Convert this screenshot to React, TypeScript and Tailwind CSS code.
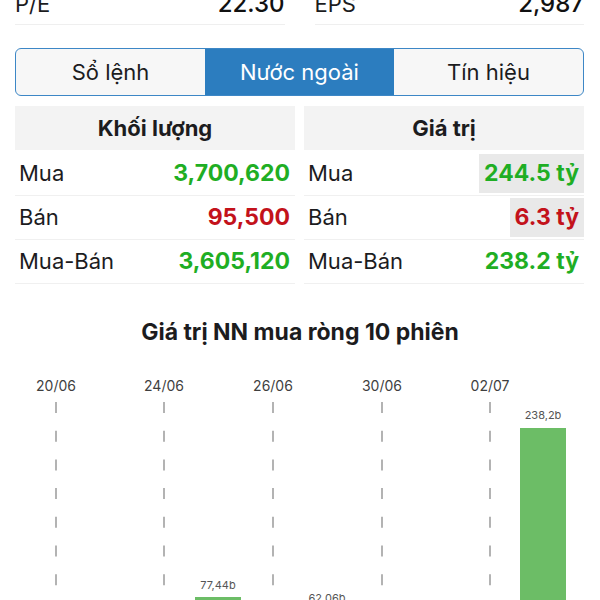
import React from "react";

const font = { fontFamily: "Inter, 'Noto Sans', sans-serif" };

function StatRow({ label, value }: { label: string; value: string }) {
  return (
    <div className="flex h-[41px] items-center justify-between border-b border-[#efefef]">
      <span className="text-[22px] text-[#1c1c1e]">{label}</span>
      <span className="text-[24px] font-medium text-[#111]">{value}</span>
    </div>
  );
}

function DataRow({
  label,
  value,
  color,
  hl,
  first,
}: {
  label: string;
  value: string;
  color: string;
  hl?: boolean;
  first?: boolean;
}) {
  return (
    <div
      className={
        (first ? "mt-[2px] " : "") +
        "flex h-11 items-center justify-between border-b border-[#f0f0f0] pl-[4px]"
      }
    >
      <span className="text-[22px] text-[#1c1c1e]">{label}</span>
      <span
        className={
          (hl ? "bg-[#e9e9e9] " : "") +
          "px-[5px] py-[5px] text-[23px] font-bold leading-[29px] " +
          color
        }
      >
        {value}
      </span>
    </div>
  );
}

const dates = ["20/06", "24/06", "26/06", "30/06", "02/07"];
const xs = [56, 164, 273, 382, 490];

export default function App() {
  return (
    <div className="h-[600px] w-[600px] overflow-hidden bg-white" style={font}>
      <div className="-mt-[16px] grid grid-cols-2 gap-x-[30px] pl-[15px] pr-[16px]">
        <StatRow label="P/E" value="22.30" />
        <StatRow label="EPS" value="2,987" />
      </div>

      <div className="mx-[15px] mr-[16px] mt-[23px] grid h-12 grid-cols-3 overflow-hidden rounded-[6px] border-[1.5px] border-[#3d87c6] bg-[#f7f7f7]">
        <div className="flex items-center justify-center text-[22px] text-[#1c1c1e]">Sổ lệnh</div>
        <div className="flex items-center justify-center bg-[#2c7dbf] text-[22px] text-white">Nước ngoài</div>
        <div className="flex items-center justify-center text-[22px] text-[#1c1c1e]">Tín hiệu</div>
      </div>

      <div className="mt-[10px] grid grid-cols-2 gap-x-[9px] pl-[15px] pr-[16px]">
        <div>
          <div className="flex h-11 items-center justify-center bg-[#f3f3f3] text-[22px] font-bold text-[#1c1c1e]">
            Khối lượng
          </div>
          <DataRow first label="Mua" value="3,700,620" color="text-[#1fae24]" />
          <DataRow label="Bán" value="95,500" color="text-[#c3121b]" />
          <DataRow label="Mua-Bán" value="3,605,120" color="text-[#1fae24]" />
        </div>
        <div>
          <div className="flex h-11 items-center justify-center bg-[#f3f3f3] text-[22px] font-bold text-[#1c1c1e]">
            Giá trị
          </div>
          <DataRow first label="Mua" value="244.5 tỷ" color="text-[#1fae24]" hl />
          <DataRow label="Bán" value="6.3 tỷ" color="text-[#c3121b]" hl />
          <DataRow label="Mua-Bán" value="238.2 tỷ" color="text-[#1fae24]" />
        </div>
      </div>

      <div className="mt-[33px] text-center text-[23px] font-bold leading-[30px] text-[#1c1c1e]">
        Giá trị NN mua ròng 10 phiên
      </div>

      <svg className="mt-[23px] block" width={600} height={330} viewBox="0 370 600 330">
        {dates.map((d, i) => (
          <text
            key={d}
            x={xs[i]}
            y={391}
            textAnchor="middle"
            fontSize={14}
            fill="#3f3f3f"
            style={font}
          >
            {d}
          </text>
        ))}
        {xs.map((x) => (
          <line
            key={x}
            x1={x}
            x2={x}
            y1={402}
            y2={700}
            stroke="#b3b3b3"
            strokeWidth={2}
            strokeDasharray="11 17.7"
          />
        ))}
        <rect x={195} y={597} width={46} height={81} fill="#6cbd66" />
        <text x={218} y={589} textAnchor="middle" fontSize={11} fill="#555" style={font}>
          77,44b
        </text>
        <rect x={304} y={613} width={46} height={65} fill="#6cbd66" />
        <text x={327} y={602} textAnchor="middle" fontSize={11} fill="#555" style={font}>
          62,06b
        </text>
        <rect x={520} y={428} width={46} height={250} fill="#6cbd66" />
        <text x={543} y={419} textAnchor="middle" fontSize={11} fill="#555" style={font}>
          238,2b
        </text>
      </svg>
    </div>
  );
}
